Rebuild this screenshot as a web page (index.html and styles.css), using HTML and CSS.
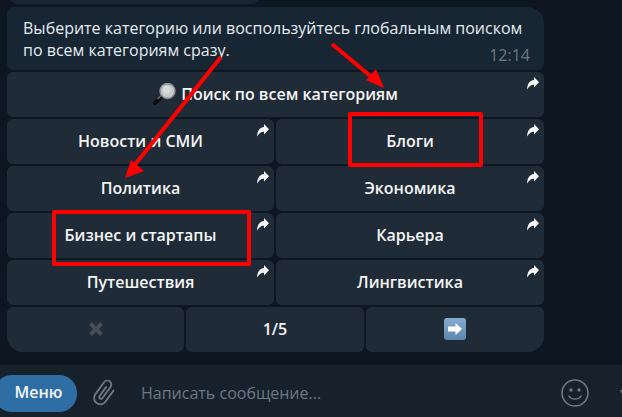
FILE: index.html
```html
<!DOCTYPE html>
<html lang="ru">
<head>
  <meta charset="UTF-8">
  <title>Telegram - Категории</title>
  <link rel="stylesheet" href="styles.css">
</head>
<body>
  <svg class="icon-defs" width="0" height="0">
    <symbol id="share" viewBox="0 0 12 13">
      <path d="M7 0 L12 5.2 L7 10.4 V7.8 C4.4 7.6 2 9 0.2 12.6 C0 7.4 2.6 3.4 7 3 Z"/>
    </symbol>
  </svg>

  <div class="chat">
    <div class="prev-bubble"></div>

    <div class="message">
      <span class="message-text">Выберите категорию или воспользуйтесь глобальным поиском по всем категориям сразу.</span>
      <span class="message-time">12:14</span>
    </div>

    <div class="keyboard">
      <button class="key key-wide">
        <svg class="magnifier" viewBox="0 0 23 22" width="23" height="22">
          <path d="M9 13 L2 20" stroke="#0c0c0c" stroke-width="4" stroke-linecap="round"/>
          <path d="M8 12.5 L4.5 16" stroke="#777b7f" stroke-width="1.2"/>
          <circle cx="14.5" cy="8" r="7.4" fill="#c6cace" stroke="#8f9397" stroke-width="1.6"/>
          <circle cx="13.5" cy="7" r="4" fill="#d8dbde"/>
        </svg>
        Поиск по всем категориям
        <svg class="share"><use href="#share"/></svg>
      </button>
      <button class="key">Новости и СМИ<svg class="share"><use href="#share"/></svg></button>
      <button class="key">Блоги<svg class="share"><use href="#share"/></svg></button>
      <button class="key">Политика<svg class="share"><use href="#share"/></svg></button>
      <button class="key">Экономика<svg class="share"><use href="#share"/></svg></button>
      <button class="key">Бизнес и стартапы<svg class="share"><use href="#share"/></svg></button>
      <button class="key">Карьера<svg class="share"><use href="#share"/></svg></button>
      <button class="key">Путешествия<svg class="share"><use href="#share"/></svg></button>
      <button class="key">Лингвистика<svg class="share"><use href="#share"/></svg></button>

      <div class="pager">
        <button class="key key-first">
          <svg viewBox="0 0 14 14" width="14" height="14"><path d="M1.5 1.5 L12.5 12.5 M12.5 1.5 L1.5 12.5" stroke="#4a4d50" stroke-width="4"/></svg>
        </button>
        <button class="key">1/5</button>
        <button class="key key-last">
          <svg viewBox="0 0 22 22" width="22" height="22">
            <defs>
              <linearGradient id="arrowTile" x1="0" y1="0" x2="0" y2="1">
                <stop offset="0" stop-color="#86acd0"/>
                <stop offset="1" stop-color="#5d87ad"/>
              </linearGradient>
            </defs>
            <rect width="22" height="22" rx="3" fill="url(#arrowTile)"/>
            <path d="M4 8.5 H11.5 V5 L18 11 L11.5 17 V13.5 H4 Z" fill="#fff"/>
          </svg>
        </button>
      </div>
    </div>

    <!-- annotations over the screenshot -->
    <div class="mark mark-blogs"></div>
    <div class="mark mark-business"></div>
    <svg class="arrows" viewBox="0 0 622 417" width="622" height="417">
      <path d="M221 57 L133 167" stroke="#f00" stroke-width="4"/>
      <path d="M125 178 L131 160 L144 171 Z" fill="#f00"/>
      <path d="M332 44 L374 79" stroke="#f00" stroke-width="4"/>
      <path d="M384 88 L366 80 L376 69 Z" fill="#f00"/>
    </svg>
  </div>

  <div class="composer">
    <button class="menu-button">Меню</button>
    <svg class="clip" viewBox="0 0 24 24" width="30" height="30">
      <path transform="rotate(36 12 12)" d="M17 6 V17 a5 5 0 0 1 -10 0 V5 a3.2 3.2 0 0 1 6.4 0 V16 a1.4 1.4 0 0 1 -2.8 0 V7" fill="none" stroke="#6d7883" stroke-width="1.5" stroke-linecap="round"/>
    </svg>
    <span class="composer-placeholder">Написать сообщение...</span>
    <svg class="smile" viewBox="0 0 28 28" width="28" height="28">
      <circle cx="14" cy="14" r="13" fill="none" stroke="#6d7883" stroke-width="1.6"/>
      <circle cx="10" cy="11" r="1.7" fill="#6d7883"/>
      <circle cx="18" cy="11" r="1.7" fill="#6d7883"/>
      <path d="M8 17 C10 21 18 21 20 17" fill="none" stroke="#6d7883" stroke-width="1.6" stroke-linecap="round"/>
    </svg>
    <svg class="mic-edge" viewBox="0 0 8 8" width="8" height="8"><path d="M0 0 H8 L4 8 Z" fill="#6d7883"/></svg>
  </div>
</body>
</html>
```

FILE: styles.css
```css
:root {
  --chat-bg: #0e1621;
  --bubble: #182533;
  --key: #202b38;
  --bar: #17212b;
  --muted: #6d7883;
}

html, body {
  margin: 0;
  padding: 0;
  height: 100%;
  overflow: hidden;
  background: var(--chat-bg);
  font-family: "Open Sans", "Noto Sans", sans-serif;
  color: #f5f5f5;
}

.icon-defs {
  display: block;
}

.chat {
  position: relative;
  height: 364px;
  padding: 7px 78px 0 7px;
  box-sizing: border-box;
}

.prev-bubble {
  position: absolute;
  left: 7px;
  top: -20px;
  width: 255px;
  height: 24px;
  background: var(--bubble);
  border-radius: 0 0 12px 12px;
}

.message {
  position: relative;
  height: 63px;
  padding: 10px 16px 0;
  box-sizing: border-box;
  background: var(--bubble);
  border-radius: 6px 16px 6px 6px;
  font-size: 16px;
  line-height: 22px;
}

.message-text {
  color: #e4ecf2;
}

.message-time {
  position: absolute;
  right: 14px;
  bottom: 4px;
  color: var(--muted);
}

.keyboard {
  display: grid;
  grid-template-columns: 267px 1fr;
  grid-auto-rows: 45px;
  gap: 2px;
  margin-top: 2px;
}

.key {
  position: relative;
  display: flex;
  align-items: center;
  justify-content: center;
  gap: 5px;
  padding: 0 0 2px;
  border: none;
  border-radius: 6px;
  background: var(--key);
  color: #f5f5f5;
  font-family: inherit;
  font-size: 16px;
  font-weight: 600;
}

.key-wide {
  grid-column: 1 / 3;
}

.pager {
  grid-column: 1 / 3;
  display: grid;
  grid-template-columns: 177px 178px 1fr;
  gap: 2px;
}

.key-first {
  border-bottom-left-radius: 16px;
}

.key-last {
  border-bottom-right-radius: 16px;
}

.share {
  position: absolute;
  top: 5px;
  right: 5px;
  width: 12px;
  height: 13px;
  fill: #f5f5f5;
}

.mark {
  position: absolute;
  border: 4px solid #f00;
  border-radius: 2px;
  box-sizing: border-box;
}

.mark-blogs {
  left: 348px;
  top: 112px;
  width: 135px;
  height: 55px;
}

.mark-business {
  left: 52px;
  top: 210px;
  width: 199px;
  height: 56px;
}

.arrows {
  position: absolute;
  left: 0;
  top: 0;
  pointer-events: none;
}

.composer {
  display: flex;
  align-items: center;
  height: 53px;
  background: var(--bar);
  border-top: 1px solid #101921;
  box-sizing: border-box;
}

.menu-button {
  flex-shrink: 0;
  width: 83px;
  height: 37px;
  margin: 4px 0 0 -6px;
  padding: 0 0 2px 6px;
  border: none;
  border-radius: 18px;
  background: #2f6ea5;
  color: #f5f5f5;
  font-family: inherit;
  font-size: 16px;
  font-weight: 600;
}

.clip {
  flex-shrink: 0;
  margin: 4px 0 0 12px;
}

.composer-placeholder {
  margin: 4px 0 0 22px;
  font-size: 16px;
  color: var(--muted);
}

.smile {
  flex-shrink: 0;
  margin: 4px 0 0 auto;
}

.mic-edge {
  flex-shrink: 0;
  margin: 6px -6px 0 31px;
}
```
